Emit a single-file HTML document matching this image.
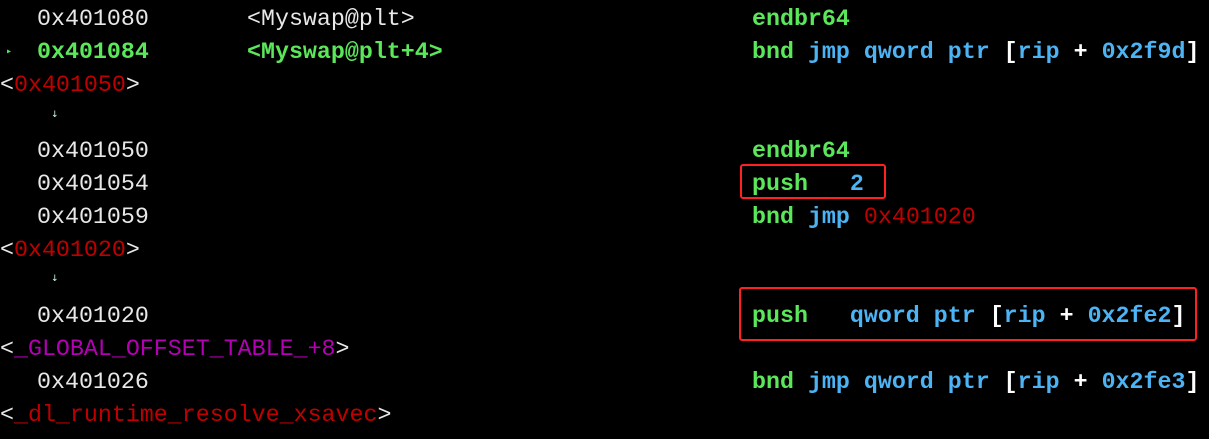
<!DOCTYPE html>
<html><head><meta charset="utf-8"><style>
html,body{margin:0;padding:0;background:#000;width:1209px;height:439px;overflow:hidden}
.l{position:absolute;white-space:pre;font-family:"Liberation Mono",monospace;font-size:23.3px;line-height:33px;height:33px;color:#e8e8e8;margin-top:1px}
.g{color:#5ae85a;font-weight:bold}
.b{color:#4cb4f4;font-weight:bold}
.r{color:#c00000}
.m{color:#b400b4}
.w{color:#fff;font-weight:bold}
.box{position:absolute;border:2px solid #ff2020;border-radius:3px;box-sizing:border-box}
.ar{position:absolute;color:#cfe;font-size:9px;font-family:"DejaVu Sans",sans-serif}
</style></head><body>
<div class="l" style="left:37px;top:2px">0x401080</div>
<div class="l" style="left:247px;top:2px">&lt;Myswap@plt&gt;</div>
<div class="l g" style="left:752px;top:2px">endbr64</div>

<div class="l" style="left:6px;top:35px;color:#5ae85a;font-size:10px">▸</div>
<div class="l g" style="left:37px;top:35px">0x401084</div>
<div class="l g" style="left:247px;top:35px">&lt;Myswap@plt+4&gt;</div>
<div class="l" style="left:752px;top:35px"><span class="g">bnd</span> <span class="b">jmp qword ptr</span> <span class="w">[</span><span class="b">rip</span> <span class="w">+</span> <span class="b">0x2f9d</span><span class="w">]</span></div>

<div class="l" style="left:0;top:68px">&lt;<span class="r">0x401050</span>&gt;</div>
<div class="ar" style="left:51px;top:110px">↓</div>

<div class="l" style="left:37px;top:134px">0x401050</div>
<div class="l g" style="left:752px;top:134px">endbr64</div>
<div class="l" style="left:37px;top:167px">0x401054</div>
<div class="l" style="left:752px;top:167px"><span class="g">push</span>   <span class="b">2</span></div>
<div class="l" style="left:37px;top:200px">0x401059</div>
<div class="l" style="left:752px;top:200px"><span class="g">bnd</span> <span class="b">jmp</span> <span class="r">0x401020</span></div>

<div class="l" style="left:0;top:233px">&lt;<span class="r">0x401020</span>&gt;</div>
<div class="ar" style="left:51px;top:274px">↓</div>

<div class="l" style="left:37px;top:299px">0x401020</div>
<div class="l" style="left:752px;top:299px"><span class="g">push</span>   <span class="b">qword ptr</span> <span class="w">[</span><span class="b">rip</span> <span class="w">+</span> <span class="b">0x2fe2</span><span class="w">]</span></div>
<div class="l" style="left:0;top:332px">&lt;<span class="m">_GLOBAL_OFFSET_TABLE_+8</span>&gt;</div>
<div class="l" style="left:37px;top:365px">0x401026</div>
<div class="l" style="left:752px;top:365px"><span class="g">bnd</span> <span class="b">jmp qword ptr</span> <span class="w">[</span><span class="b">rip</span> <span class="w">+</span> <span class="b">0x2fe3</span><span class="w">]</span></div>
<div class="l" style="left:0;top:398px">&lt;<span class="r">_dl_runtime_resolve_xsavec</span>&gt;</div>

<div class="box" style="left:740px;top:164px;width:146px;height:35px"></div>
<div class="box" style="left:739px;top:287px;width:458px;height:54px"></div>
</body></html>
